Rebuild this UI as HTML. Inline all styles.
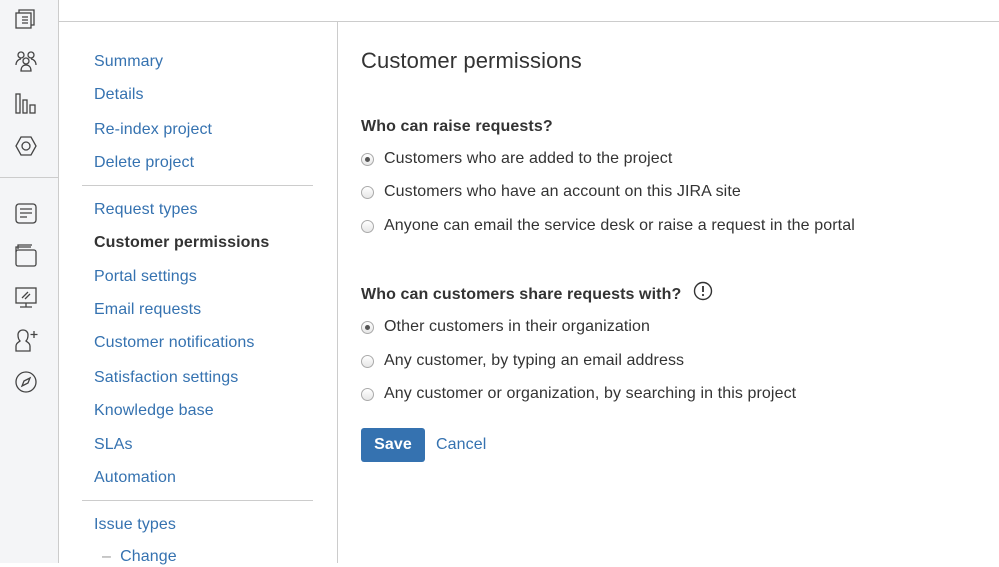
<!DOCTYPE html><html><head><style>
body{margin:0;width:999px;height:563px;overflow:hidden;background:#fff;font-family:"Liberation Sans",sans-serif;position:relative;letter-spacing:0.1px}
.side{position:absolute;left:0;top:0;width:58px;height:563px;background:#f4f5f7;border-right:1px solid #ccc}
.side .hr{position:absolute;left:0;width:58px;top:177px;border-top:1px solid #ccc}
.top{position:absolute;left:59px;right:0;top:21px;border-top:1px solid #ccc}
.vl{position:absolute;left:337px;top:22px;bottom:0;border-left:1px solid #ccc}
.nav a{position:absolute;left:94px;font-size:16px;text-decoration:none;line-height:20px;color:#3572b0}
.nav b{position:absolute;left:94px;font-size:16px;line-height:20px;color:#333}
.nav .d{position:absolute;left:82px;width:231px;border-top:1px solid #ccc}
h1{position:absolute;left:361px;top:48px;margin:0;font-size:22px;font-weight:normal;color:#333}
h3{position:absolute;left:361px;margin:0;font-size:16px;color:#333;font-weight:bold}
.r{position:absolute;left:361px;font-size:16px;color:#333;line-height:20px}
.r i{position:absolute;left:0;top:4px;width:11px;height:11px;border:1px solid #aaa;border-radius:50%;background:linear-gradient(#fff,#e6e6e6)}
.r i.on:after{content:"";position:absolute;left:3px;top:3px;width:5px;height:5px;border-radius:50%;background:#555}
.r span{margin-left:23px}
.btn{position:absolute;left:361px;top:428px;width:64px;height:34px;background:#3572b0;border-radius:3px;color:#fff;font-weight:bold;font-size:16px;text-align:center;line-height:34px}
svg{position:absolute;left:14px}
</style></head><body>
<div class="side"><div class="hr"></div>
<svg style="top:8px" width="24" height="22" viewBox="0 0 24 22" fill="none" stroke="#444" stroke-width="1.3"><rect x="2" y="5" width="15" height="15"/><path d="M5 5V2h15v15h-3M8 9h6M8 12h6M8 15h6"/></svg>
<svg style="top:50px" width="24" height="22" viewBox="0 0 24 22" fill="none" stroke="#444" stroke-width="1.3"><circle cx="7" cy="5" r="3"/><circle cx="17" cy="5" r="3"/><circle cx="12" cy="11" r="3"/><path d="M2 15c0-4 3-6 5-6M22 15c0-4-3-6-5-6M7 21c0-4 2-6 5-6s5 2 5 6z"/></svg>
<svg style="top:92px" width="24" height="22" viewBox="0 0 24 22" fill="none" stroke="#444" stroke-width="1.3"><rect x="2" y="2" width="4" height="19"/><rect x="9" y="8" width="4" height="13"/><rect x="16" y="13" width="5" height="8"/></svg>
<svg style="top:135px" width="24" height="22" viewBox="0 0 24 22" fill="none" stroke="#444" stroke-width="1.3"><path d="M7 2h10l5 9-5 9H7l-5-9z"/><circle cx="12" cy="11" r="4"/></svg>
<svg style="top:202px" width="24" height="22" viewBox="0 0 24 22" fill="none" stroke="#444" stroke-width="1.3"><rect x="2" y="2" width="20" height="19" rx="3"/><path d="M6 7h12M6 11h12M6 15h7"/></svg>
<svg style="top:243px" width="24" height="24" viewBox="0 0 24 24" fill="none" stroke="#444" stroke-width="1.3"><rect x="2" y="7" width="20" height="16" rx="2"/><path d="M2 9V4h15M4 6V2h14"/></svg>
<svg style="top:286px" width="24" height="24" viewBox="0 0 24 24" fill="none" stroke="#444" stroke-width="1.3"><rect x="2" y="2" width="20" height="15"/><path d="M8 12l6-6M11 13l5-5M12 17v4M6 21h12"/></svg>
<svg style="top:328px" width="26" height="24" viewBox="0 0 26 24" fill="none" stroke="#444" stroke-width="1.3"><path d="M2 23v-5c0-3 3-4 4-5-2-2-2-4-2-6 0-3 2-5 5-5s5 2 5 5c0 2 0 4-2 6 1 1 4 2 4 5v5zM20 3v7M16.5 6.5h7"/></svg>
<svg style="top:370px" width="24" height="24" viewBox="0 0 24 24" fill="none" stroke="#444" stroke-width="1.3"><circle cx="12" cy="12" r="10"/><path d="M16 8l-6 3-2 5 6-3z"/></svg>
</div>
<div class="top"></div><div class="vl"></div>
<div class="nav">
<a style="top:52px">Summary</a><a style="top:85px">Details</a><a style="top:120px">Re-index project</a><a style="top:153px">Delete project</a>
<div class="d" style="top:185px"></div>
<a style="top:200px">Request types</a><b style="top:233px">Customer permissions</b><a style="top:267px">Portal settings</a><a style="top:300px">Email requests</a><a style="top:333px">Customer notifications</a><a style="top:368px">Satisfaction settings</a><a style="top:401px">Knowledge base</a><a style="top:435px">SLAs</a><a style="top:468px">Automation</a>
<div class="d" style="top:500px"></div>
<a style="top:515px">Issue types</a><a style="top:547px;left:102px"><span style="color:#999">–</span>&nbsp; Change</a>
</div>
<h1>Customer permissions</h1>
<h3 style="top:118px">Who can raise requests?</h3>
<div class="r" style="top:149px"><i class="on"></i><span>Customers who are added to the project</span></div>
<div class="r" style="top:182px"><i></i><span>Customers who have an account on this JIRA site</span></div>
<div class="r" style="top:216px"><i></i><span>Anyone can email the service desk or raise a request in the portal</span></div>
<h3 style="top:286px">Who can customers share requests with?</h3>
<svg style="left:693px;top:281px" width="20" height="20" viewBox="0 0 20 20"><circle cx="10" cy="10" r="8.5" fill="none" stroke="#333" stroke-width="1.4"/><path d="M10 5v6" stroke="#333" stroke-width="1.8"/><circle cx="10" cy="14" r="1.1" fill="#333"/></svg>
<div class="r" style="top:317px"><i class="on"></i><span>Other customers in their organization</span></div>
<div class="r" style="top:351px"><i></i><span>Any customer, by typing an email address</span></div>
<div class="r" style="top:384px"><i></i><span>Any customer or organization, by searching in this project</span></div>
<div class="btn">Save</div>
<div style="position:absolute;left:436px;top:436px;font-size:16px;color:#3572b0">Cancel</div>
</body></html>
